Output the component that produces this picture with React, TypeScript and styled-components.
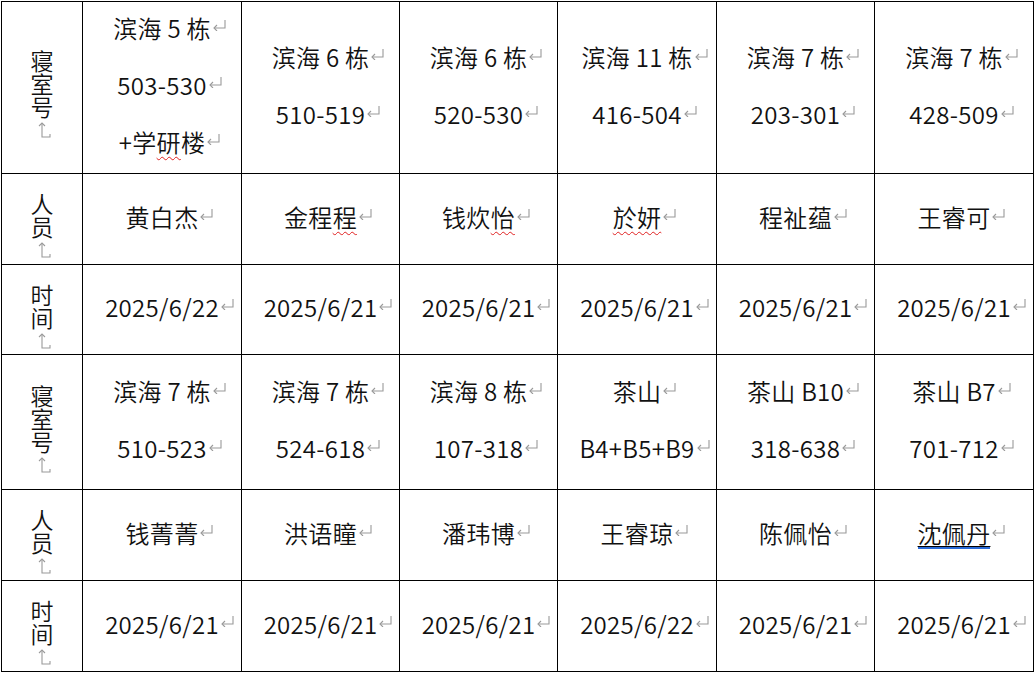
import React from "react";
import styled, { createGlobalStyle } from "styled-components";

const Global = createGlobalStyle`
  html, body { margin: 0; padding: 0; background: #fff; }
  body { font-family: "Noto Sans CJK SC", "Noto Sans", sans-serif; color: #111; }
`;

const COLS = [81, 159, 158, 158, 159, 158, 159];
const ROWS = [172, 91, 90, 135, 91, 91];

const Table = styled.div`
  display: grid;
  grid-template-columns: ${COLS.map((c) => c + "px").join(" ")};
  grid-template-rows: ${ROWS.map((r) => r + "px").join(" ")};
  width: fit-content;
  margin: 1px 0 0 1px;
  border-left: 1px solid #000;
  border-top: 1px solid #000;
`;

const Cell = styled.div`
  box-sizing: border-box;
  border-right: 1px solid #000;
  border-bottom: 1px solid #000;
  display: flex;
  flex-direction: column;
  align-items: center;
  justify-content: center;
  font-size: 24px;
  font-weight: 350;
  padding-bottom: 6px;
`;

const HeadCell = styled(Cell)`
  padding-top: 14px;
  padding-bottom: 0;
`;

const VText = styled.span`
  display: block;
  writing-mode: vertical-lr;
  text-orientation: upright;
  line-height: 26px;
  font-size: 23px;
`;

const VMark = styled.svg`
  display: block;
  width: 14px;
  height: 18px;
  margin-left: 6px;
  margin-top: 2px;
`;

const Line = styled.div`
  line-height: 57px;
  white-space: nowrap;
  letter-spacing: 0.3px;
`;

const MarkBox = styled.svg`
  display: inline-block;
  width: 16px;
  height: 12px;
  margin-right: -16px;
  vertical-align: 7px;
`;

const Wavy = styled.span`
  text-decoration: underline wavy #e02020;
  text-decoration-thickness: 1px;
  text-underline-offset: 4px;
`;

const Linked = styled.span`
  text-decoration: underline #000;
  text-decoration-thickness: 1px;
  text-underline-offset: 3px;
  border-bottom: 2px solid #2a6bd8;
  line-height: 28px;
  display: inline-block;
`;

const Mark = () => (
  <MarkBox viewBox="0 0 16 12" fill="none" stroke="#9a9a9a" strokeWidth="1.1">
    <path d="M14 1 V9 H3" />
    <path d="M6 6 L3 9 L6 12" />
  </MarkBox>
);

const VerticalMark = () => (
  <VMark viewBox="0 0 14 18" fill="none" stroke="#9a9a9a" strokeWidth="1.1">
    <path d="M4 2 V16 H12 V13" />
    <path d="M1 5 L4 2 L7 5" />
  </VMark>
);

const Head = ({ text }: { text: string }) => (
  <HeadCell>
    <VText>{text}</VText>
    <VerticalMark />
  </HeadCell>
);

type Content = React.ReactNode[];

const Data = ({ lines }: { lines: Content }) => (
  <Cell>
    {lines.map((l, i) => (
      <Line key={i}>
        {l}
        <Mark />
      </Line>
    ))}
  </Cell>
);

const rows: { head: string; cells: Content[] }[] = [
  {
    head: "寝室号",
    cells: [
      ["滨海 5 栋", "503-530", <>+学<Wavy>研</Wavy>楼</>],
      ["滨海 6 栋", "510-519"],
      ["滨海 6 栋", "520-530"],
      ["滨海 11 栋", "416-504"],
      ["滨海 7 栋", "203-301"],
      ["滨海 7 栋", "428-509"],
    ],
  },
  {
    head: "人员",
    cells: [
      ["黄白杰"],
      [<>金程<Wavy>程</Wavy></>],
      [<>钱炊<Wavy>怡</Wavy></>],
      [<Wavy>於妍</Wavy>],
      ["程祉蕴"],
      ["王睿可"],
    ],
  },
  {
    head: "时间",
    cells: [
      ["2025/6/22"],
      ["2025/6/21"],
      ["2025/6/21"],
      ["2025/6/21"],
      ["2025/6/21"],
      ["2025/6/21"],
    ],
  },
  {
    head: "寝室号",
    cells: [
      ["滨海 7 栋", "510-523"],
      ["滨海 7 栋", "524-618"],
      ["滨海 8 栋", "107-318"],
      ["茶山", "B4+B5+B9"],
      ["茶山 B10", "318-638"],
      ["茶山 B7", "701-712"],
    ],
  },
  {
    head: "人员",
    cells: [
      ["钱菁菁"],
      ["洪语瞳"],
      ["潘玮博"],
      ["王睿琼"],
      ["陈佩怡"],
      [<Linked>沈佩丹</Linked>],
    ],
  },
  {
    head: "时间",
    cells: [
      ["2025/6/21"],
      ["2025/6/21"],
      ["2025/6/21"],
      ["2025/6/22"],
      ["2025/6/21"],
      ["2025/6/21"],
    ],
  },
];

export default function App() {
  return (
    <>
      <Global />
      <Table>
        {rows.map((r, ri) => (
          <React.Fragment key={ri}>
            <Head text={r.head} />
            {r.cells.map((c, ci) => (
              <Data key={ci} lines={c} />
            ))}
          </React.Fragment>
        ))}
      </Table>
    </>
  );
}
